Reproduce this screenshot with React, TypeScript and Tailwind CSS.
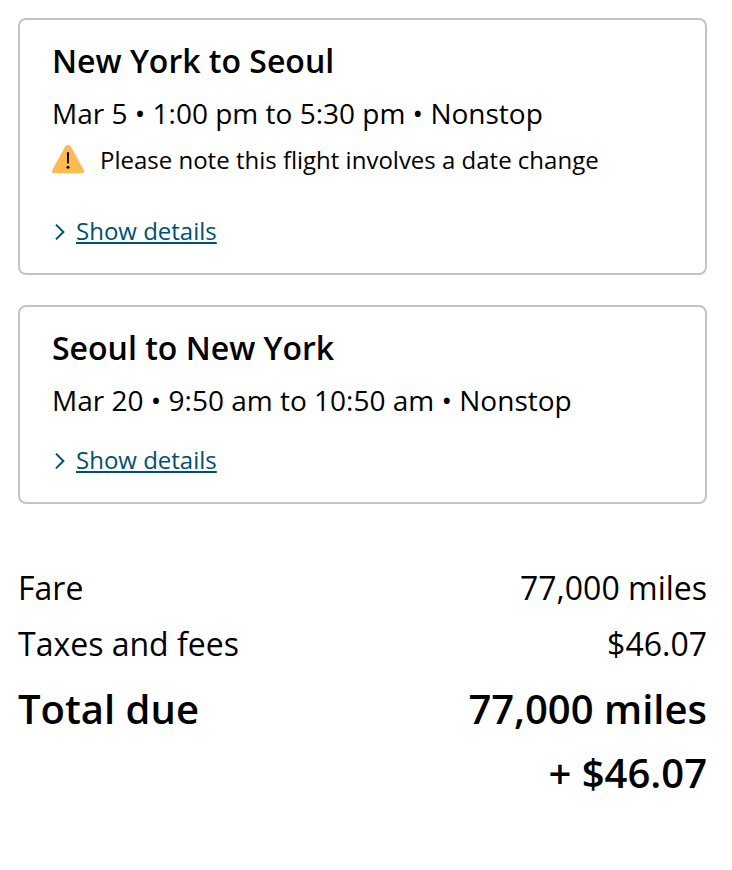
import type { ReactNode } from "react"

type FlightCardProps = {
  title: string
  summary: string
  children?: ReactNode
}

function WarningIcon() {
  return (
    <svg width="32" height="30" viewBox="0 0 32 30" aria-hidden="true" className="shrink-0">
      <path d="M12.8 2c1.5-2.7 4.9-2.7 6.4 0l12.4 22.8c1 1.8 0 3.5-2 3.5H2.4c-2 0-3-1.7-2-3.5z" fill="#ffbb52" />
      <path d="M14.9 7.2h2.2l-.3 11.2h-1.6z" fill="#000" />
      <circle cx="16" cy="22.2" r="1.5" fill="#000" />
    </svg>
  )
}

function FlightCard({ title, summary, children }: FlightCardProps) {
  return (
    <section className="rounded-lg border-2 border-[#c4c4c4] px-8 pt-[19px] pb-6">
      <h2 className="text-[32px] leading-[44px] font-semibold">{title}</h2>
      <p className="mt-2 text-[28px] leading-[44px]">{summary}</p>
      {children}
      <div className="mt-5 flex items-center gap-2">
        <svg width="16" height="20" viewBox="0 0 16 20" fill="none" aria-hidden="true">
          <path d="M4 3.6l7.4 7.4L4 18.4" stroke="#005071" strokeWidth="2" />
        </svg>
        <a href="#" className="text-2xl leading-9 text-[#005071] underline decoration-2 underline-offset-2">Show details</a>
      </div>
    </section>
  )
}

export default function App() {
  return (
    <main className="bg-white pt-[18px] pr-[25px] pb-8 pl-[18px] font-['Open_Sans',sans-serif] text-black">
      <div className="flex flex-col gap-[30px]">
        <FlightCard title="New York to Seoul" summary="Mar 5 • 1:00 pm to 5:30 pm • Nonstop">
          <div className="mt-[7px] mb-[35px] flex items-center gap-4">
            <WarningIcon />
            <p className="text-2xl leading-9">Please note this flight involves a date change</p>
          </div>
        </FlightCard>
        <FlightCard title="Seoul to New York" summary="Mar 20 • 9:50 am to 10:50 am • Nonstop" />
      </div>

      {/* Price summary */}
      <dl className="mt-14">
        <div className="flex justify-between text-[32px] leading-[56px]">
          <dt>Fare</dt>
          <dd>77,000 miles</dd>
        </div>
        <div className="flex justify-between text-[32px] leading-[56px]">
          <dt>Taxes and fees</dt>
          <dd>$46.07</dd>
        </div>
        <div className="mt-[5px] flex justify-between text-[40px] leading-[64px] font-semibold">
          <dt>Total due</dt>
          <dd className="text-right">
            <span className="block">77,000 miles</span>
            <span className="block">+ $46.07</span>
          </dd>
        </div>
      </dl>
    </main>
  )
}
